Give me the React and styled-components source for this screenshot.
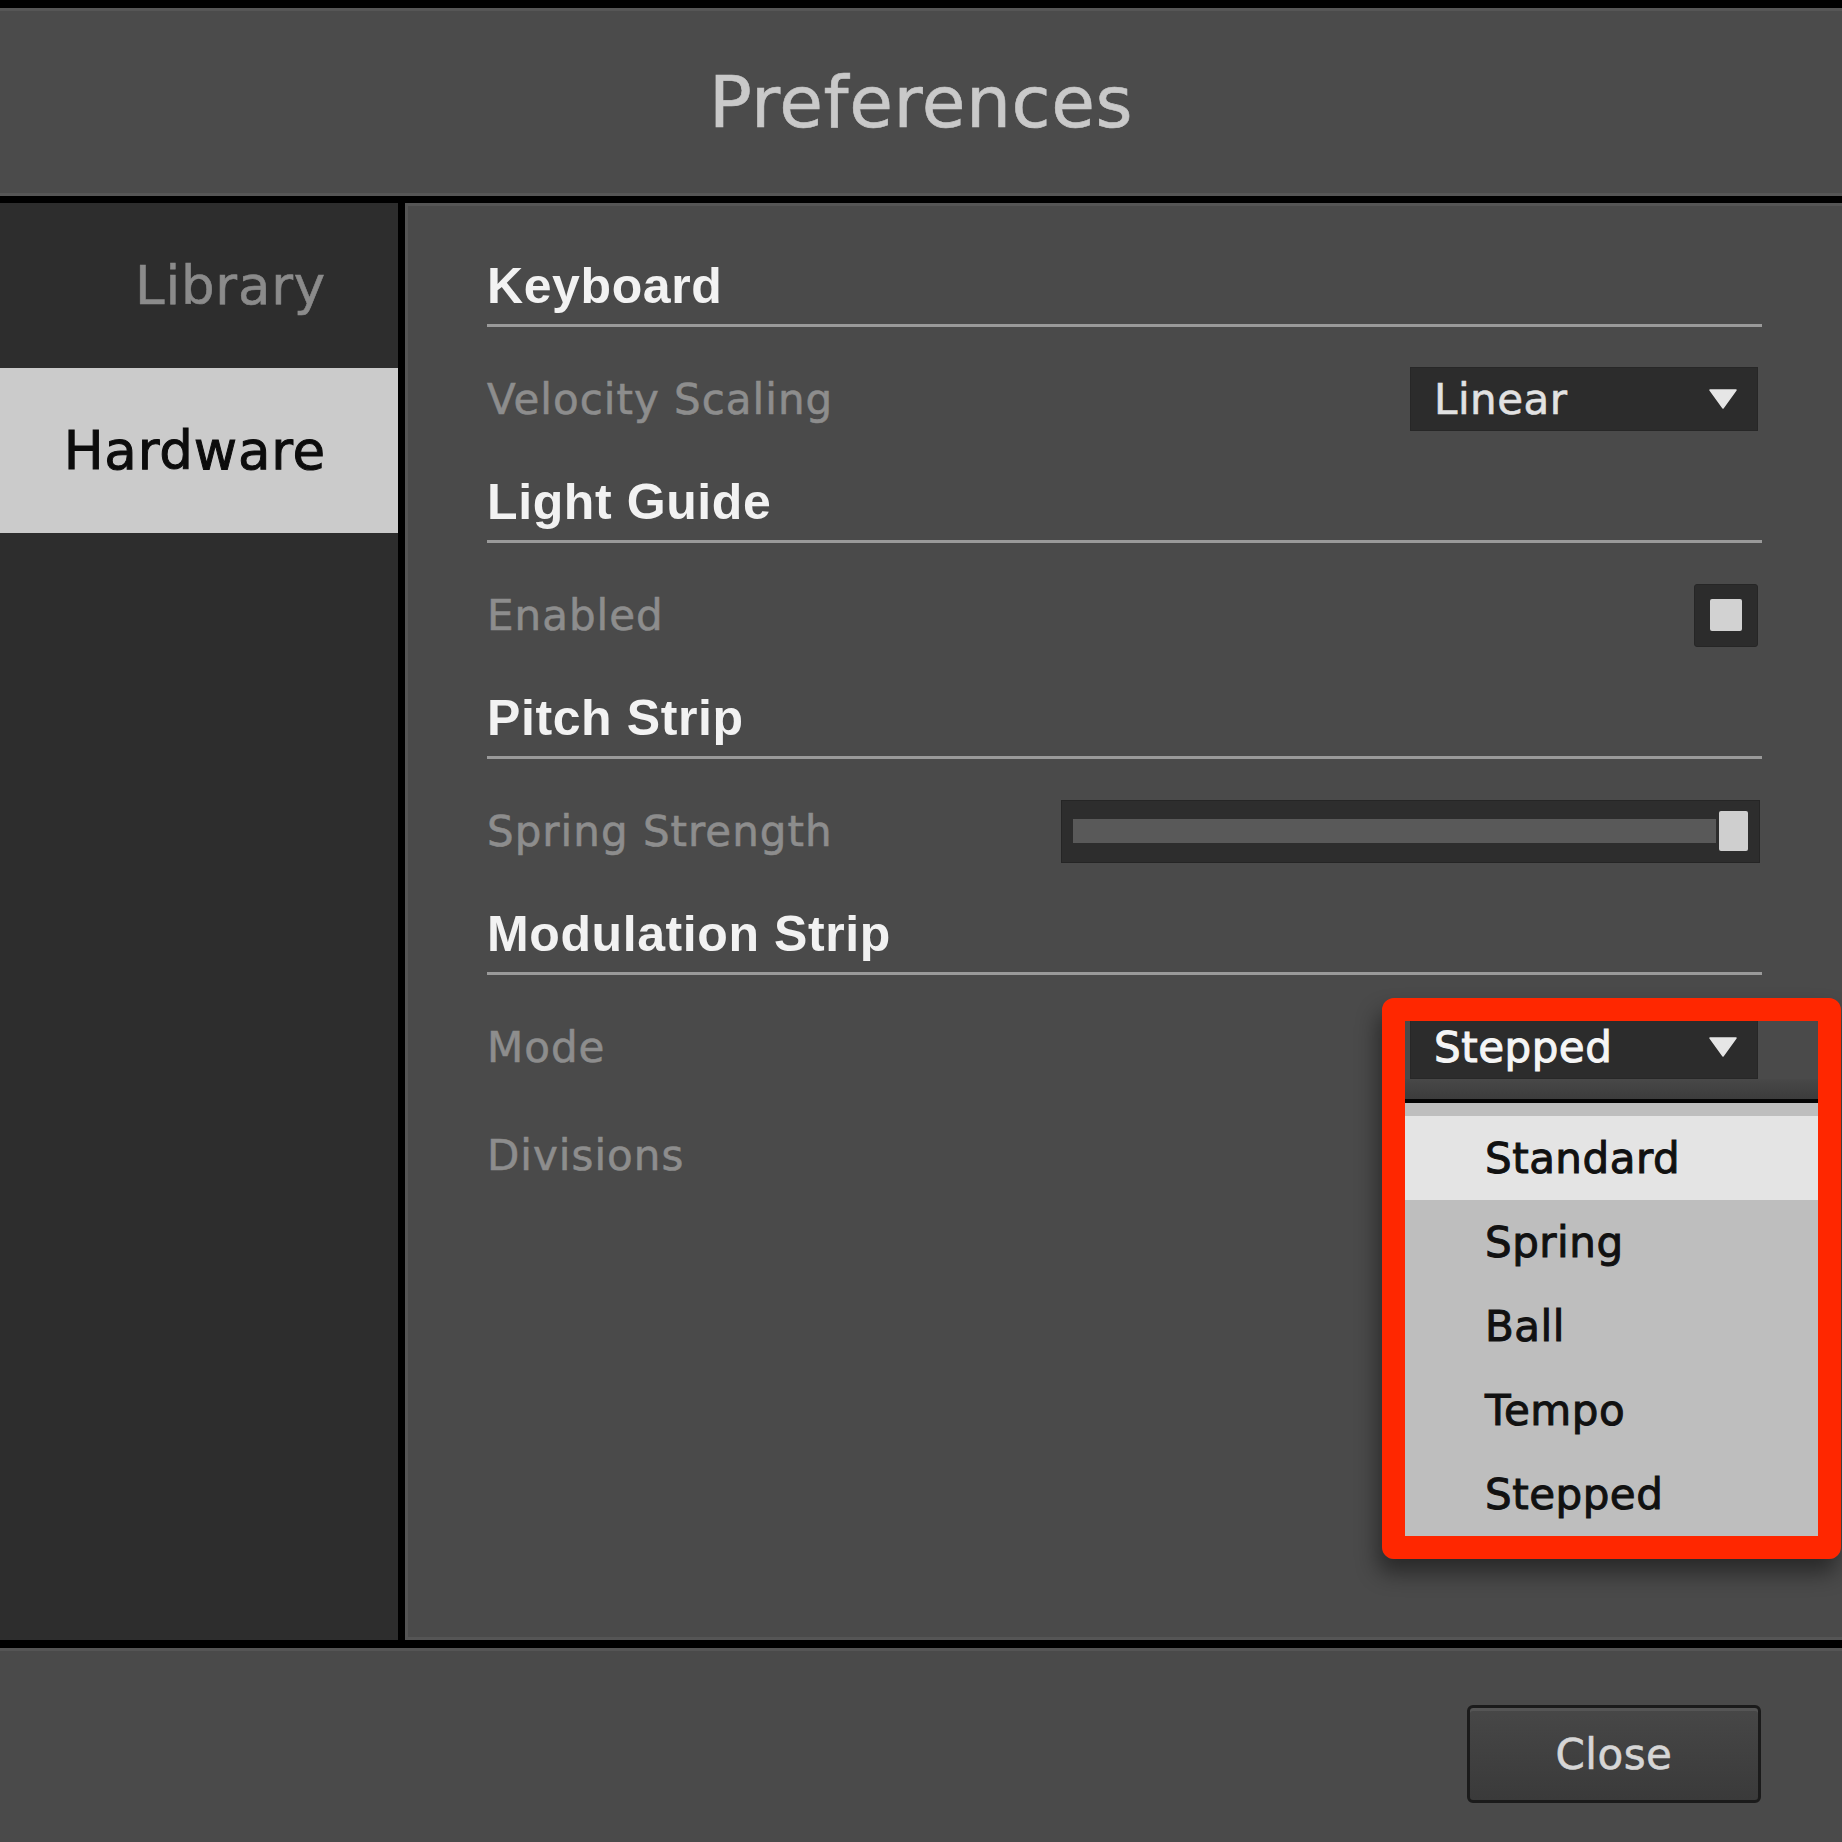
import styled, { createGlobalStyle } from 'styled-components'

const GlobalStyle = createGlobalStyle`
  html, body {
    margin: 0;
    padding: 0;
    background: #000;
  }
  * {
    box-sizing: border-box;
  }
`

const ui = '"DejaVu Sans", Verdana, sans-serif'
const heading = '"Liberation Sans", Arial, sans-serif'

const Window = styled.div`
  width: 1842px;
  height: 1842px;
  overflow: hidden;
  background: #000;
  padding-top: 8px;
  display: flex;
  flex-direction: column;
  font-family: ${ui};
`

const Header = styled.header`
  height: 188px;
  flex-shrink: 0;
  display: flex;
  align-items: center;
  justify-content: center;
  background: #4b4b4b;
  box-shadow: inset 0 3px 0 #565656, inset 0 -3px 0 #565656;
`

const Title = styled.h1`
  margin: 0;
  font-family: ${ui};
  font-weight: normal;
  font-size: 71px;
  letter-spacing: 0.6px;
  color: #c9c9c9;
  -webkit-text-stroke: 0.6px #c9c9c9;
`

const Body = styled.div`
  margin-top: 7px;
  height: 1437px;
  flex-shrink: 0;
  display: flex;
  gap: 7px;
`

const Sidebar = styled.nav`
  width: 398px;
  flex-shrink: 0;
  background: #2d2d2d;
  display: flex;
  flex-direction: column;
`

const NavItem = styled.div`
  height: 165px;
  display: flex;
  align-items: center;
  justify-content: flex-end;
  padding-right: 72px;
  font-size: 53px;
  letter-spacing: 0.8px;
  color: ${(p) => (p.$active ? '#0c0c0c' : '#8b8b8b')};
  background: ${(p) => (p.$active ? '#cbcbcb' : 'transparent')};
  -webkit-text-stroke: ${(p) => (p.$active ? '1px' : '0.6px')} currentColor;
`

const Content = styled.main`
  flex: 1;
  background: #4a4a4a;
  box-shadow: inset 0 3px 0 #555, inset 0 -3px 0 #555, inset 3px 0 0 #555;
  padding: 53px 80px 0 82px;
  display: flex;
  flex-direction: column;
  gap: 19px;
`

const Section = styled.section`
  display: flex;
  flex-direction: column;
`

const SectionTitle = styled.h2`
  margin: 0 0 18px;
  font-family: ${heading};
  font-weight: bold;
  font-size: 50px;
  letter-spacing: 0.6px;
  line-height: 60px;
  padding-bottom: 8px;
  color: #f2f2f2;
  border-bottom: 3px solid #9a9a9a;
`

const Row = styled.div`
  height: 108px;
  display: flex;
  align-items: center;
  justify-content: space-between;
`

const Label = styled.span`
  font-size: 42px;
  letter-spacing: 1px;
  color: #8d8d8d;
  -webkit-text-stroke: 0.6px #8d8d8d;
`

const Control = styled.div`
  position: relative;
  margin-right: 4px;
`

const Select = styled.div`
  width: 348px;
  height: 64px;
  display: flex;
  align-items: center;
  justify-content: space-between;
  padding: 0 20px 0 23px;
  background: #2c2c2c;
  border: 1px solid #272727;
  font-size: 42px;
  letter-spacing: 0.5px;
  color: ${(p) => (p.$bright ? '#f5f5f5' : '#e2e2e2')};
  -webkit-text-stroke: ${(p) => (p.$bright ? '1px' : '0.6px')} currentColor;
`

const Checkbox = styled.div`
  width: 64px;
  height: 63px;
  display: flex;
  align-items: center;
  justify-content: center;
  background: #2c2c2c;
  border: 1px solid #262626;
  border-radius: 3px;

  &::after {
    content: '';
    width: 32px;
    height: 32px;
    border-radius: 2px;
    background: #d2d2d2;
  }
`

const Slider = styled.div`
  width: 699px;
  height: 63px;
  margin-right: -2px;
  display: flex;
  align-items: center;
  gap: 3px;
  padding: 0 11px;
  background: #2d2d2d;
  border: 1px solid #252525;
`

const Track = styled.div`
  flex: 1;
  height: 24px;
  background: #595959;
`

const Thumb = styled.div`
  width: 29px;
  height: 40px;
  border-radius: 2px;
  background: #cfcfcf;
`

const Popup = styled.div`
  position: absolute;
  left: -5px;
  top: 64px;
  width: 413px;
  z-index: 2;
`

const PopupShade = styled.div`
  height: 20px;
  background: linear-gradient(#484848, #3c3c3c);
`

const Menu = styled.ul`
  margin: 0;
  padding: 13px 0 0;
  list-style: none;
  background: #bebebe;
  border-top: 4px solid #050505;
`

const MenuItem = styled.li`
  height: 84px;
  display: flex;
  align-items: center;
  padding-left: 80px;
  font-size: 42px;
  letter-spacing: 0.5px;
  color: #111;
  -webkit-text-stroke: 1px #111;
  background: ${(p) => (p.$hover ? '#e4e4e4' : 'transparent')};
`

const Highlight = styled.div`
  position: absolute;
  left: -28px;
  top: -17px;
  width: 459px;
  height: 561px;
  border: 23px solid #ff2700;
  border-radius: 12px;
  z-index: 3;
  pointer-events: none;
  box-shadow: -4px 14px 22px rgba(0, 0, 0, 0.45);
`

const Footer = styled.footer`
  margin-top: 8px;
  flex: 1;
  background: #4a4a4a;
  box-shadow: inset 0 3px 0 #555;
  display: flex;
  justify-content: flex-end;
  align-items: flex-start;
  padding: 57px 81px 0 0;
`

const CloseButton = styled.button`
  width: 294px;
  height: 98px;
  border: 3px solid #1b1b1b;
  border-radius: 6px;
  background: linear-gradient(#474747, #3a3a3a);
  box-shadow: inset 0 3px 0 #555;
  font-family: ${ui};
  font-size: 42px;
  letter-spacing: 0.5px;
  color: #d6d6d6;
  -webkit-text-stroke: 0.6px #d6d6d6;
`

const Caret = () => (
  <svg width="28" height="20" viewBox="0 0 28 20">
    <polygon points="1,1 27,1 14,19" fill="#e6e6e6" stroke="#e6e6e6" strokeWidth="1.5" strokeLinejoin="round" />
  </svg>
)

const modes = ['Standard', 'Spring', 'Ball', 'Tempo', 'Stepped']

export default function App() {
  return (
    <>
      <GlobalStyle />
      <Window>
        <Header>
          <Title>Preferences</Title>
        </Header>
        <Body>
          <Sidebar>
            <NavItem>Library</NavItem>
            <NavItem $active>Hardware</NavItem>
          </Sidebar>
          <Content>
            <Section>
              <SectionTitle>Keyboard</SectionTitle>
              <Row>
                <Label>Velocity Scaling</Label>
                <Control>
                  <Select>
                    Linear
                    <Caret />
                  </Select>
                </Control>
              </Row>
            </Section>
            <Section>
              <SectionTitle>Light Guide</SectionTitle>
              <Row>
                <Label>Enabled</Label>
                <Control>
                  <Checkbox />
                </Control>
              </Row>
            </Section>
            <Section>
              <SectionTitle>Pitch Strip</SectionTitle>
              <Row>
                <Label>Spring Strength</Label>
                <Control>
                  <Slider>
                    <Track />
                    <Thumb />
                  </Slider>
                </Control>
              </Row>
            </Section>
            <Section>
              <SectionTitle>Modulation Strip</SectionTitle>
              <Row>
                <Label>Mode</Label>
                <Control>
                  <Select $bright>
                    Stepped
                    <Caret />
                  </Select>
                  <Popup>
                    <PopupShade />
                    <Menu>
                      {modes.map((m, i) => (
                        <MenuItem key={m} $hover={i === 0}>
                          {m}
                        </MenuItem>
                      ))}
                    </Menu>
                  </Popup>
                  <Highlight />
                </Control>
              </Row>
              <Row>
                <Label>Divisions</Label>
              </Row>
            </Section>
          </Content>
        </Body>
        <Footer>
          <CloseButton>Close</CloseButton>
        </Footer>
      </Window>
    </>
  )
}
